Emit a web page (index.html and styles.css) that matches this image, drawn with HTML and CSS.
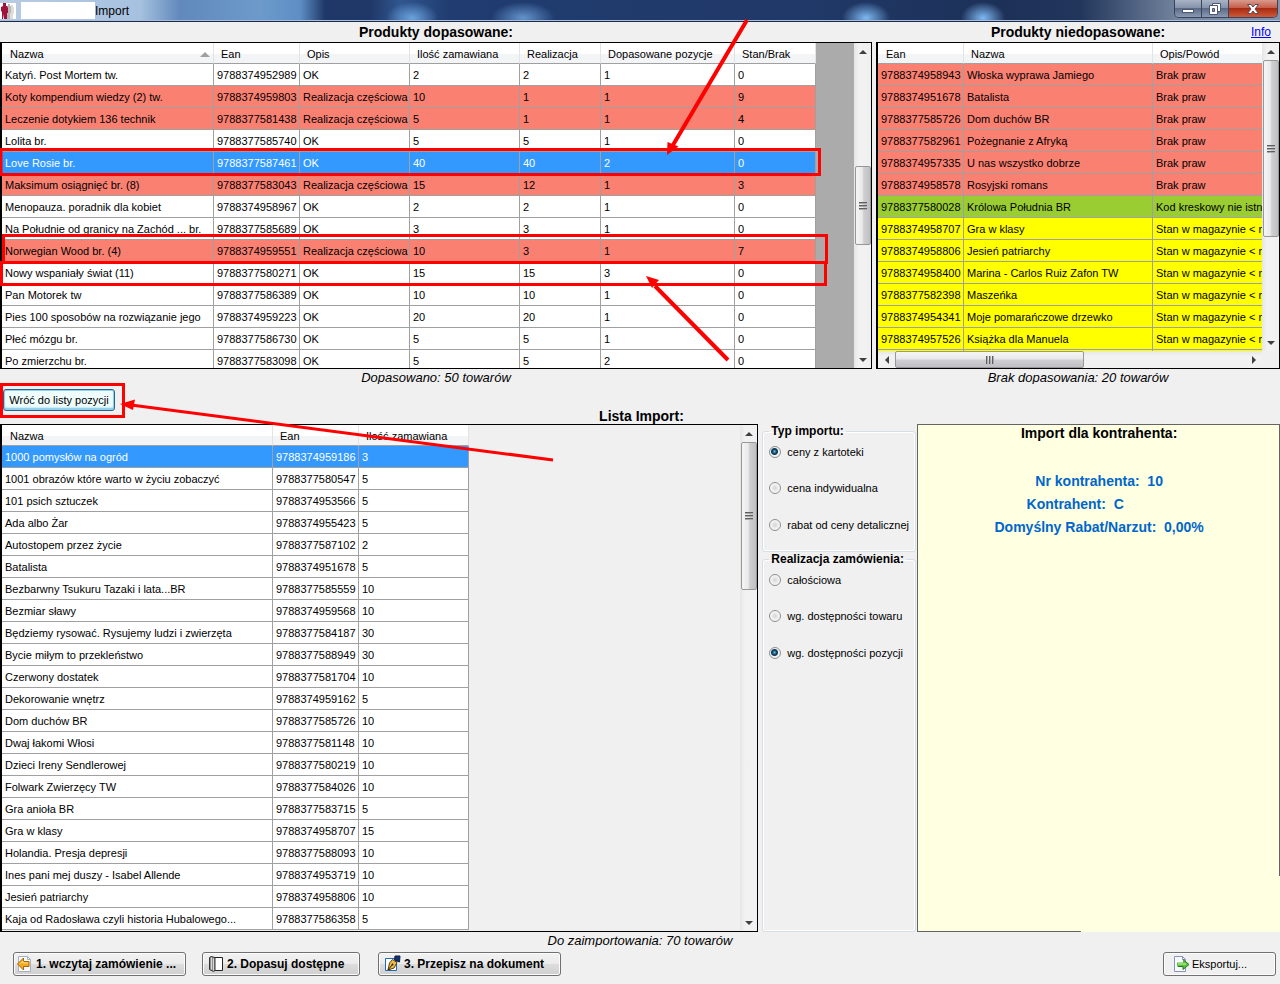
FILE: index.html
```html
<!DOCTYPE html>
<html lang="pl">
<head>
<meta charset="utf-8">
<title>Import</title>
<link rel="stylesheet" href="styles.css">
</head>
<body>
<div class="window">
  <header class="titlebar">
    <svg class="app-icon" width="16" height="16" viewBox="0 0 16 16" aria-hidden="true"><path fill="#fff" d="M0 0h16v16H0z"/><path fill="#dcdcdc" d="M11 2h2v2h1v7h-1v5h-3V4h1z"/><path fill="#b9b9b9" d="M8 1h2v2h1v7h-1v6H7V3h1z"/><path fill="#a0123c" d="M3 0h3v3h1l1 2v5H7v6H4l-.500-5L3 16H2V9L1 8V4l2-1z"/></svg>
    <span class="app-name"></span>
    <h1 class="title">Import</h1>
    <div class="controls">
      <button class="ctl" type="button" aria-label="Minimalizuj"><svg width="14" height="12" viewBox="0 0 14 12"><rect x="1.500" y="6.500" width="11" height="3" fill="#fff" stroke="#4d5670"/></svg></button>
      <button class="ctl" type="button" aria-label="Przywróć"><svg width="14" height="12" viewBox="0 0 14 12"><path d="M4.500.500h8v8h-8z" fill="#fff" stroke="#4d5670"/><path d="M1.500 2.500h8v9h-8z" fill="#fff" stroke="#4d5670"/><path d="M4.500 5.500h2v3h-2z" fill="#8795b5" stroke="#4d5670"/></svg></button>
      <button class="ctl ctl-close" type="button" aria-label="Zamknij"><svg width="14" height="12" viewBox="0 0 14 12"><path d="M1.500 1.500h3.500l2 2.500 2-2.500h3.500L9 6l3.500 4.500H9L7 8l-2 2.500H1.500L5 6z" fill="#fff" stroke="#5b4a58"/></svg></button>
    </div>
  </header>

  <main class="content">
    <div class="top">
      <section class="matched">
        <h2 class="caption">Produkty dopasowane:</h2>
        <div class="grid">
          <div class="view view-dark">
            <table class="t-matched">
              <colgroup><col class="w212"><col class="w86"><col class="w110"><col class="w110"><col class="w81"><col class="w134"><col class="w81"></colgroup>
              <thead><tr><th>Nazwa<span class="sort"></span></th><th>Ean</th><th>Opis</th><th>Ilość zamawiana</th><th>Realizacja</th><th>Dopasowane pozycje</th><th>Stan/Brak</th></tr></thead>
              <tbody>
                <tr><td>Katyń. Post Mortem tw.</td><td>9788374952989</td><td>OK</td><td>2</td><td>2</td><td>1</td><td>0</td></tr>
                <tr class="red"><td>Koty kompendium wiedzy (2) tw.</td><td>9788374959803</td><td>Realizacja częściowa</td><td>10</td><td>1</td><td>1</td><td>9</td></tr>
                <tr class="red"><td>Leczenie dotykiem 136 technik</td><td>9788377581438</td><td>Realizacja częściowa</td><td>5</td><td>1</td><td>1</td><td>4</td></tr>
                <tr><td>Lolita br.</td><td>9788377585740</td><td>OK</td><td>5</td><td>5</td><td>1</td><td>0</td></tr>
                <tr class="selected"><td>Love Rosie br.</td><td>9788377587461</td><td>OK</td><td>40</td><td>40</td><td>2</td><td>0</td></tr>
                <tr class="red"><td>Maksimum osiągnięć br. (8)</td><td>9788377583043</td><td>Realizacja częściowa</td><td>15</td><td>12</td><td>1</td><td>3</td></tr>
                <tr><td>Menopauza. poradnik dla kobiet</td><td>9788374958967</td><td>OK</td><td>2</td><td>2</td><td>1</td><td>0</td></tr>
                <tr><td>Na Południe od granicy na Zachód ... br.</td><td>9788377585689</td><td>OK</td><td>3</td><td>3</td><td>1</td><td>0</td></tr>
                <tr class="red"><td>Norwegian Wood br. (4)</td><td>9788374959551</td><td>Realizacja częściowa</td><td>10</td><td>3</td><td>1</td><td>7</td></tr>
                <tr><td>Nowy wspaniały świat (11)</td><td>9788377580271</td><td>OK</td><td>15</td><td>15</td><td>3</td><td>0</td></tr>
                <tr><td>Pan Motorek tw</td><td>9788377586389</td><td>OK</td><td>10</td><td>10</td><td>1</td><td>0</td></tr>
                <tr><td>Pies 100 sposobów na rozwiązanie jego</td><td>9788374959223</td><td>OK</td><td>20</td><td>20</td><td>1</td><td>0</td></tr>
                <tr><td>Płeć mózgu br.</td><td>9788377586730</td><td>OK</td><td>5</td><td>5</td><td>1</td><td>0</td></tr>
                <tr><td>Po zmierzchu br.</td><td>9788377583098</td><td>OK</td><td>5</td><td>5</td><td>2</td><td>0</td></tr>
              </tbody>
            </table>
          </div>
          <div class="vbar"><span class="arrow up"></span><span class="space"></span><span class="thumb th-matched"></span><span class="space"></span><span class="arrow down"></span></div>
        </div>
        <p class="status">Dopasowano: 50 towarów</p>
      </section>

      <section class="unmatched">
        <div class="caption-row"><h2 class="caption">Produkty niedopasowane:</h2><a class="info" href="#info">Info</a></div>
        <div class="grid">
          <div class="stack">
            <div class="view">
              <table class="t-unmatched">
                <colgroup><col class="w86"><col class="w189"><col class="w134"></colgroup>
                <thead><tr><th>Ean</th><th>Nazwa</th><th>Opis/Powód</th></tr></thead>
                <tbody>
                  <tr class="red"><td>9788374958943</td><td>Włoska wyprawa Jamiego</td><td>Brak praw</td></tr>
                  <tr class="red"><td>9788374951678</td><td>Batalista</td><td>Brak praw</td></tr>
                  <tr class="red"><td>9788377585726</td><td>Dom duchów BR</td><td>Brak praw</td></tr>
                  <tr class="red"><td>9788377582961</td><td>Pożegnanie z Afryką</td><td>Brak praw</td></tr>
                  <tr class="red"><td>9788374957335</td><td>U nas wszystko dobrze</td><td>Brak praw</td></tr>
                  <tr class="red"><td>9788374958578</td><td>Rosyjski romans</td><td>Brak praw</td></tr>
                  <tr class="green"><td>9788377580028</td><td>Królowa Południa BR</td><td>Kod kreskowy nie istnie</td></tr>
                  <tr class="yellow"><td>9788374958707</td><td>Gra w klasy</td><td>Stan w magazynie &lt; ni</td></tr>
                  <tr class="yellow"><td>9788374958806</td><td>Jesień patriarchy</td><td>Stan w magazynie &lt; ni</td></tr>
                  <tr class="yellow"><td>9788374958400</td><td>Marina - Carlos Ruiz Zafon TW</td><td>Stan w magazynie &lt; ni</td></tr>
                  <tr class="yellow"><td>9788377582398</td><td>Maszeńka</td><td>Stan w magazynie &lt; ni</td></tr>
                  <tr class="yellow"><td>9788374954341</td><td>Moje pomarańczowe drzewko</td><td>Stan w magazynie &lt; ni</td></tr>
                  <tr class="yellow"><td>9788374957526</td><td>Książka dla Manuela</td><td>Stan w magazynie &lt; ni</td></tr>
                  <tr class="yellow"><td></td><td></td><td></td></tr>
                </tbody>
              </table>
            </div>
            <div class="hbar"><span class="arrow left"></span><span class="thumb th-horizontal"></span><span class="space"></span><span class="arrow right"></span></div>
          </div>
          <div class="vbar vbar-short"><span class="arrow up"></span><span class="thumb th-unmatched"></span><span class="space"></span><span class="arrow down"></span></div>
        </div>
        <p class="status">Brak dopasowania: 20 towarów</p>
      </section>
    </div>

    <div class="middle">
      <button class="btn btn-focus" type="button">Wróć do listy pozycji</button>
      <h2 class="caption list-caption">Lista Import:</h2>
    </div>

    <div class="bottom">
      <section class="grid import-list">
        <div class="view">
          <table class="t-import">
            <colgroup><col class="w271"><col class="w86"><col class="w110"></colgroup>
            <thead><tr><th>Nazwa</th><th>Ean</th><th>Ilość zamawiana</th></tr></thead>
            <tbody>
              <tr class="selected"><td>1000 pomysłów na ogród</td><td>9788374959186</td><td>3</td></tr>
              <tr><td>1001 obrazów które warto w życiu zobaczyć</td><td>9788377580547</td><td>5</td></tr>
              <tr><td>101 psich sztuczek</td><td>9788374953566</td><td>5</td></tr>
              <tr><td>Ada albo Żar</td><td>9788374955423</td><td>5</td></tr>
              <tr><td>Autostopem przez życie</td><td>9788377587102</td><td>2</td></tr>
              <tr><td>Batalista</td><td>9788374951678</td><td>5</td></tr>
              <tr><td>Bezbarwny Tsukuru Tazaki i lata...BR</td><td>9788377585559</td><td>10</td></tr>
              <tr><td>Bezmiar sławy</td><td>9788374959568</td><td>10</td></tr>
              <tr><td>Będziemy rysować. Rysujemy ludzi i zwierzęta</td><td>9788377584187</td><td>30</td></tr>
              <tr><td>Bycie miłym to przekleństwo</td><td>9788377588949</td><td>30</td></tr>
              <tr><td>Czerwony dostatek</td><td>9788377581704</td><td>10</td></tr>
              <tr><td>Dekorowanie wnętrz</td><td>9788374959162</td><td>5</td></tr>
              <tr><td>Dom duchów BR</td><td>9788377585726</td><td>10</td></tr>
              <tr><td>Dwaj łakomi Włosi</td><td>9788377581148</td><td>10</td></tr>
              <tr><td>Dzieci Ireny Sendlerowej</td><td>9788377580219</td><td>10</td></tr>
              <tr><td>Folwark Zwierzęcy TW</td><td>9788377584026</td><td>10</td></tr>
              <tr><td>Gra anioła BR</td><td>9788377583715</td><td>5</td></tr>
              <tr><td>Gra w klasy</td><td>9788374958707</td><td>15</td></tr>
              <tr><td>Holandia. Presja depresji</td><td>9788377588093</td><td>10</td></tr>
              <tr><td>Ines pani mej duszy - Isabel Allende</td><td>9788374953719</td><td>10</td></tr>
              <tr><td>Jesień patriarchy</td><td>9788374958806</td><td>10</td></tr>
              <tr><td>Kaja od Radosława czyli historia Hubalowego...</td><td>9788377586358</td><td>5</td></tr>
            </tbody>
          </table>
        </div>
        <div class="vbar"><span class="arrow up"></span><span class="thumb th-import"></span><span class="space"></span><span class="arrow down"></span></div>
      </section>

      <div class="options">
        <fieldset class="group group-type">
          <legend>Typ importu:</legend>
          <label><input type="radio" name="typ" checked>ceny z kartoteki</label>
          <label><input type="radio" name="typ">cena indywidualna</label>
          <label><input type="radio" name="typ">rabat od ceny detalicznej</label>
        </fieldset>
        <fieldset class="group group-fill">
          <legend>Realizacja zamówienia:</legend>
          <label><input type="radio" name="realizacja">całościowa</label>
          <label><input type="radio" name="realizacja">wg. dostępności towaru</label>
          <label><input type="radio" name="realizacja" checked>wg. dostępności pozycji</label>
        </fieldset>
      </div>

      <aside class="client">
        <h2 class="client-title">Import dla kontrahenta:</h2>
        <p>Nr kontrahenta:&nbsp; 10</p>
        <p class="client-name">Kontrahent:&nbsp; C</p>
        <p>Domyślny Rabat/Narzut:&nbsp; 0,00%</p>
      </aside>
    </div>
    <p class="status">Do zaimportowania: 70 towarów</p>
  </main>

  <footer class="actions">
    <button class="btn btn-strong b-load" type="button"><svg width="16" height="18" viewBox="0 0 16 18" aria-hidden="true"><path d="M1.500 1.500h9l3 3v12h-12z" fill="#f7f9fc" stroke="#a8b0be"/><path d="M10.500 1.500v3h3" fill="none" stroke="#a8b0be"/><path d="M.500 9 6.500 3v3.500H12v5H6.500V15z" fill="#f5a81c" stroke="#a8690c"/><path d="M3 9l3-3v2h5" fill="none" stroke="#ffe08a"/></svg>1. wczytaj zamówienie ...</button>
    <button class="btn btn-strong b-match" type="button"><svg width="16" height="18" viewBox="0 0 16 18" aria-hidden="true"><path d="M6.500 2.500h8v13h-8z" fill="#fff" stroke="#222"/><path d="M1.500 2.500 3 1.500l4 1v13l-1.500 1-4-2z" fill="#909090" stroke="#333"/><path d="M3.500 2.500v12M5.500 3.500v12" stroke="#d8d8d8"/></svg>2. Dopasuj dostępne</button>
    <button class="btn btn-strong b-write" type="button"><svg width="17" height="18" viewBox="0 0 17 18" aria-hidden="true"><path d="M1.500 3.500h11v12h-11z" fill="#fff" stroke="#1e68b8"/><path d="M11 1h5l-.500 6-5-2z" fill="#12326e" stroke="#0b1e48"/><path d="M8.500 4.500l4.500 3L10 13l-6 2 1.500-7z" fill="#f0bf45" stroke="#5b3b10"/><path d="M4 15l4-5" stroke="#2b1c08"/><circle cx="8.500" cy="9.500" r="1" fill="#2b1c08"/></svg>3. Przepisz na dokument</button>
    <button class="btn b-export" type="button"><svg width="17" height="17" viewBox="0 0 17 17" aria-hidden="true"><path d="M1.500.500h8l3 3v12h-11z" fill="#f8faff" stroke="#8a93bd"/><path d="M9.500.500v3h3" fill="none" stroke="#8a93bd"/><path d="M4 6.500h6v-3L16 8.500l-6 5v-3H4z" fill="#5cc33a"/><path d="M10 3.500L16 8.500l-6 5v-3H5" fill="none" stroke="#237a1c"/><path d="M5 8h8" stroke="#c8f2a8"/></svg>Eksportuj...</button>
  </footer>

  <svg class="marks" width="1280" height="984" viewBox="0 0 1280 984" aria-hidden="true">
    <g fill="none" stroke="#f00" stroke-width="3">
      <path d="M1 149.500h818.500v25H1z"/>
      <path d="M3.500 235.500h823v27h-823z"/>
      <path d="M1.500 262.500h824v22h-824z"/>
      <path d="M1.500 384.500h122v32H1.500z"/>
      <path stroke-width="4" d="M747 20L673 145M728 360L655 286"/>
      <path d="M553 460L131 405"/>
    </g>
    <g fill="#f00"><path d="M667 155l.500-13 11 4.500z"/><path d="M646 276l13 4-7 8z"/><path d="M120 404l15-4.500-2 10.500z"/></g>
  </svg>
</div>
</body>
</html>
```
FILE: styles.css
```css
* {
  box-sizing: border-box;
}

body {
  margin: 0;
  background: #f0f0f0;
  color: #000;
  font: 11px/14px "Liberation Sans", Arial, sans-serif;
}

h1, h2, p {
  margin: 0;
  font-weight: normal;
}

.window {
  position: relative;
  display: flex;
  flex-direction: column;
  height: 100vh;
  overflow: hidden;
}

/* Title bar */
.titlebar {
  display: flex;
  flex: none;
  align-items: center;
  height: 22px;
  border-bottom: 1px solid #1c2c4c;
  box-shadow: inset 0 -1px #a9bcd8;
  background:
    radial-gradient(ellipse 26px 16px at 412px 18px, #6ba3dd, transparent),
    radial-gradient(ellipse 32px 16px at 523px 18px, #6394cc, transparent),
    radial-gradient(ellipse 24px 16px at 866px 18px, #7db9f2, transparent),
    radial-gradient(ellipse 22px 16px at 983px 18px, #7db9f2, transparent),
    linear-gradient(90deg, #b9cbe2 0, #a6c1e0 140px, #6189bb 180px, #6c9acb 260px, #5d8fc5 300px, #1f3868 325px, #1f3868 370px, #31568f 400px, #203c70 450px, #203968 800px, #1d3158 1000px, #22365c 1080px, #75869f 1180px, #8494ab 100%);
}

.app-icon {
  flex: none;
}

.app-name {
  width: 74px;
  height: 17px;
  margin: 0 0 0 5px;
  background: #fff;
}

.title {
  flex: 1;
  font-size: 12px;
  line-height: 20px;
}

.controls {
  display: flex;
  align-self: flex-start;
  margin-right: 2px;
  border: 1px solid #39445c;
  border-top: 0;
  border-radius: 0 0 5px 5px;
  overflow: hidden;
}

.ctl {
  display: flex;
  align-items: center;
  justify-content: center;
  width: 27px;
  height: 17px;
  padding: 0;
  border: 0;
  border-right: 1px solid #39445c;
  background: linear-gradient(#a9b4c6, #8592aa 45%, #5b6a86 50%, #8b9ab3);
}

.ctl-close {
  width: 48px;
  border-right: 0;
  background: linear-gradient(#d99a8c, #c65f4a 45%, #a82a12 50%, #cf5a38);
}

/* Page areas */
.content {
  display: flex;
  flex: 1;
  flex-direction: column;
  min-height: 0;
}

.top {
  display: flex;
  flex: 362 1 0;
  gap: 4px;
  min-height: 0;
}

.matched, .unmatched {
  display: flex;
  flex-direction: column;
  min-width: 0;
  min-height: 0;
}

.matched {
  flex: 872 1 0;
}

.unmatched {
  flex: 404 1 0;
}

.caption {
  flex: none;
  font-size: 14px;
  font-weight: bold;
  line-height: 20px;
  text-align: center;
}

.caption-row {
  display: grid;
  grid-template-columns: 29px 1fr 29px;
}

.caption-row .caption {
  grid-column: 2;
}

.info {
  color: #00f;
  font-size: 12px;
  line-height: 20px;
}

.status {
  flex: none;
  height: 15px;
  overflow: hidden;
  font-size: 13px;
  font-style: italic;
  line-height: 17px;
  text-align: center;
}

/* Data grids */
.grid {
  display: flex;
  flex: 1;
  min-height: 0;
  border: 1px solid #000;
  border-left-width: 2px;
}

.stack {
  display: flex;
  flex: 1;
  flex-direction: column;
  min-width: 0;
}

.view {
  flex: 1;
  min-width: 0;
  min-height: 0;
  overflow: hidden;
}

.view-dark {
  background: #ababab;
}

table {
  border-spacing: 0;
  table-layout: fixed;
}

.t-matched {
  width: 814px;
}

.t-unmatched {
  width: 409px;
}

.t-import {
  width: 467px;
}

.w81 { width: 81px; }
.w86 { width: 86px; }
.w110 { width: 110px; }
.w134 { width: 134px; }
.w189 { width: 189px; }
.w212 { width: 212px; }
.w271 { width: 271px; }

th {
  position: relative;
  height: 21px;
  padding: 2px 0 0 8px;
  border-right: 1px solid #e2e3e5;
  border-bottom: 1px solid #a0a0a0;
  background: linear-gradient(#fff 55%, #f3f4f6 55%, #f3f4f6);
  font-weight: normal;
  text-align: left;
  white-space: nowrap;
}

th + th {
  padding-left: 7px;
}

.sort {
  position: absolute;
  top: 9px;
  right: 3px;
  border: 5px solid transparent;
  border-top: 0;
  border-bottom-color: #a0a0a0;
}

td {
  height: 22px;
  padding: 0 0 0 3px;
  border-right: 1px solid #a0a0a0;
  border-bottom: 1px solid #a0a0a0;
  background: #fff;
  white-space: nowrap;
  overflow: hidden;
}

.red td { background: #fa8072; }
.green td { background: #9acd32; }
.yellow td { background: #ff0; }
.selected td { background: #3399ff; color: #fff; }

/* Scroll bars */
.vbar, .hbar {
  display: flex;
  flex: none;
  background: linear-gradient(90deg, #e6e6e6, #f2f2f2 30%, #f0f0f0);
}

.vbar {
  flex-direction: column;
  width: 17px;
}

.vbar-short {
  margin-bottom: 17px;
}

.hbar {
  height: 17px;
  background: linear-gradient(#e6e6e6, #f2f2f2 30%, #f0f0f0);
}

.arrow {
  display: flex;
  flex: none;
  align-items: center;
  justify-content: center;
  width: 17px;
  height: 17px;
}

.arrow::after {
  content: "";
  border: 4px solid transparent;
}

.up::after { border-top: 0; border-bottom-color: #404040; }
.down::after { border-bottom: 0; border-top-color: #404040; }
.left::after { border-left: 0; border-right-color: #404040; }
.right::after { border-right: 0; border-left-color: #404040; }

.space {
  flex: 1;
}

.thumb {
  display: flex;
  flex: none;
  align-items: center;
  justify-content: center;
  border: 1px solid #979797;
  border-radius: 2px;
  background: linear-gradient(90deg, #f5f5f5, #e9e9eb 45%, #cfcfd2 55%, #c0c0c4);
}

.vbar .thumb {
  align-self: flex-end;
  width: 16px;
}

.thumb::after {
  content: "";
  width: 8px;
  height: 8px;
  background: repeating-linear-gradient(#5f5f5f 0 1px, #aaa 1px 2px, transparent 2px 3px);
}

.th-matched { height: 79px; }
.th-unmatched { height: 177px; }
.th-import { height: 148px; }

.th-horizontal {
  width: 189px;
  background: linear-gradient(#f5f5f5, #e9e9eb 45%, #cfcfd2 55%, #c0c0c4);
}

.th-horizontal::after {
  background: repeating-linear-gradient(90deg, #5f5f5f 0 1px, #aaa 1px 2px, transparent 2px 3px);
}

/* Middle strip */
.middle {
  display: grid;
  flex: none;
  grid-template-columns: 1fr auto 1fr;
  height: 40px;
  padding-left: 3px;
}

.list-caption {
  align-self: end;
  line-height: 16px;
}

.btn {
  display: flex;
  align-items: center;
  height: 24px;
  padding: 0;
  border: 1px solid #707070;
  border-radius: 3px;
  box-shadow: inset 0 0 0 1px #fcfcfc;
  background: linear-gradient(#f2f2f2, #ebebeb 50%, #dddddd 50%, #cfcfcf);
  color: #000;
  font: 11px/14px "Liberation Sans", Arial, sans-serif;
  white-space: nowrap;
}

.btn-focus {
  justify-self: start;
  justify-content: center;
  width: 112px;
  height: 22px;
  margin-top: 5px;
  border-color: #2c628b;
  box-shadow: inset 0 0 0 1px #8fd0f0, inset 0 -2px 2px #7cc0e4;
  background: #eefcfc;
}

/* Bottom area */
.bottom {
  display: flex;
  flex: 508 1 0;
  min-height: 0;
}

.import-list {
  flex: 758 1 0;
  min-width: 0;
}

.options {
  display: flex;
  flex: none;
  flex-direction: column;
  width: 154px;
  margin: 0 1px 0 4px;
}

.group {
  display: flex;
  flex-direction: column;
  min-width: 0;
  margin: 0;
  padding: 0 0 0 6px;
  border: 1px solid #d5dfe5;
  border-radius: 3px;
  box-shadow: inset 0 0 0 1px #fff;
}

.group-type {
  height: 128px;
}

.group-fill {
  flex: 1;
}

.group legend {
  padding: 0 2px;
  font-size: 12px;
  font-weight: bold;
  line-height: 14px;
}

.group label {
  display: flex;
  align-items: center;
  gap: 6px;
  height: 37px;
  white-space: nowrap;
}

.group label:first-of-type {
  height: 31px;
  padding-bottom: 3px;
}

.group input {
  appearance: none;
  flex: none;
  width: 12px;
  height: 12px;
  margin: 0;
  border: 1px solid #8e8f8f;
  border-radius: 50%;
  background: radial-gradient(circle, #d4d4d6 0, #ececec 3px, #f8f8f8 5px);
}

.group input:checked {
  background: radial-gradient(circle at 45% 45%, #5cc8ee 0, #12496b 2px, #12394f 3px, #eef2f4 4px);
}

.client {
  flex: 363 1 0;
  border-top: 1px solid #646464;
  border-left: 1px solid #646464;
  background:
    linear-gradient(#646464, #646464) right top / 1px 89% no-repeat,
    linear-gradient(#646464, #646464) left bottom / 45% 1px no-repeat,
    #ffffe1;
  color: #0066cc;
  font-size: 14px;
  line-height: 23px;
  text-align: center;
}

.client p {
  font-weight: bold;
}

.client-title {
  margin-bottom: 28px;
  color: #000;
  font-size: 14px;
  font-weight: bold;
  line-height: 17px;
}

.client-name {
  padding-right: 48px;
}

/* Actions */
.actions {
  display: flex;
  flex: none;
  gap: 16px;
  height: 37px;
  padding: 5px 4px 0 13px;
}

.btn-strong {
  gap: 3px;
  padding-left: 3px;
  font-size: 12px;
  font-weight: bold;
}

.b-load { width: 173px; }
.b-match { width: 158px; padding-left: 5px; }
.b-write { width: 183px; margin-left: 2px; padding-left: 5px; }

.b-export {
  gap: 2px;
  width: 113px;
  margin-left: auto;
  padding-left: 9px;
  background: #f0f0f0;
}

/* Hand-drawn marks over the window */
.marks {
  position: absolute;
  top: 0;
  left: 0;
  pointer-events: none;
}
```
